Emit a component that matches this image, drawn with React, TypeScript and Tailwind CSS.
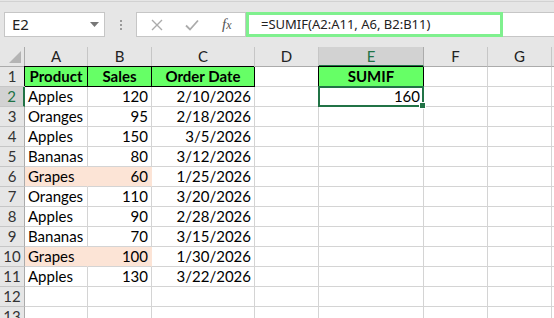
import React from 'react';

const colNames = ['A', 'B', 'C', 'D', 'E', 'F', 'G'];
const colWidths = [63, 64, 103, 64, 105, 64, 64];

type Val = string | number | null;

const data: Val[][] = [
  ['Product', 'Sales', 'Order Date', null, 'SUMIF'],
  ['Apples', 120, '2/10/2026', null, 160],
  ['Oranges', 95, '2/18/2026'],
  ['Apples', 150, '3/5/2026'],
  ['Bananas', 80, '3/12/2026'],
  ['Grapes', 60, '1/25/2026'],
  ['Oranges', 110, '3/20/2026'],
  ['Apples', 90, '2/28/2026'],
  ['Bananas', 70, '3/15/2026'],
  ['Grapes', 100, '1/30/2026'],
  ['Apples', 130, '3/22/2026'],
  [],
  [],
];

const pinkRows = [6, 10];

function Toolbar() {
  return (
    <div className="h-[47px] bg-[#e6e6e6] pt-[1px]">
      <div className="h-full border-t border-[#d2d2d2] flex items-start pt-[10px]">
        {/* name box */}
        <div className="ml-[4px] w-[101px] h-[25px] bg-white border border-[#c6c6c6] flex items-center pl-[7px] pr-[5px]">
          <span className="flex-1 text-[15px] text-[#222] font-['Noto_Sans',sans-serif]">E2</span>
          <svg width="9" height="5" viewBox="0 0 9 5">
            <path d="M0 0 L9 0 L4.5 5 Z" fill="#777" />
          </svg>
        </div>
        {/* separator dots */}
        <div className="w-[31px] h-[25px] flex flex-col items-center justify-center gap-[2px]">
          <div className="w-[2px] h-[2px] bg-[#9a9a9a]" />
          <div className="w-[2px] h-[2px] bg-[#9a9a9a]" />
          <div className="w-[2px] h-[2px] bg-[#9a9a9a]" />
        </div>
        {/* formula strip */}
        <div className="flex-1 h-[25px] bg-white border-y border-l border-[#c6c6c6] flex">
          <div className="w-[109px] h-full border-r border-[#c6c6c6] flex items-center">
            <svg className="ml-[14px]" width="12" height="12" viewBox="0 0 12 12">
              <path d="M1 1 L11 11 M11 1 L1 11" stroke="#ababab" strokeWidth="1.4" />
            </svg>
            <svg className="ml-[22px]" width="14" height="12" viewBox="0 0 14 12">
              <path d="M1 6.5 L5 10.5 L13 1.5" stroke="#ababab" strokeWidth="1.8" fill="none" />
            </svg>
            <span className="ml-[23px] text-[15px] italic text-[#555] font-['Liberation_Serif',serif] leading-none">
              f<span className="text-[12px]">x</span>
            </span>
          </div>
          <div className="w-[257px] h-[calc(100%+2px)] -mt-[1px] border-[3px] border-[#7ff08e] flex items-center pl-[12px]">
            <span className="text-[13px] text-[#222] font-['Noto_Sans',sans-serif] whitespace-nowrap">
              =SUMIF(A2:A11, A6, B2:B11)
            </span>
          </div>
        </div>
      </div>
    </div>
  );
}

function HeaderRow() {
  return (
    <div className="flex h-[20px]">
      <div className="w-[25px] shrink-0 h-full bg-[#e6e6e6] border-r border-b border-[#ababab] flex items-end justify-end p-[3px]">
        <svg width="12" height="12" viewBox="0 0 12 12">
          <path d="M12 0 L12 12 L0 12 Z" fill="#b4b4b4" />
        </svg>
      </div>
      {colNames.map((c, i) => (
        <div
          key={c}
          style={{ width: colWidths[i] }}
          className={
            c === 'E'
              ? 'shrink-0 h-full bg-[#d2d2d2] border-r border-[#ababab] border-b-2 border-b-[#217346] flex items-center justify-center text-[15px] text-[#217346]'
              : 'shrink-0 h-full bg-[#e6e6e6] border-r border-b border-[#c6c6c6] border-b-[#ababab] flex items-center justify-center text-[15px] text-[#222]'
          }
        >
          {c}
        </div>
      ))}
      <div className="flex-1 h-full bg-[#e6e6e6] border-b border-[#ababab]" />
    </div>
  );
}

function Row({ r, vals }: { r: number; vals: Val[] }) {
  const pink = pinkRows.includes(r);
  return (
    <div className="flex h-[20px]">
      <div
        className={
          r === 2
            ? 'w-[25px] shrink-0 h-full bg-[#d2d2d2] border-b border-[#c6c6c6] border-r-2 border-r-[#217346] flex items-center justify-center text-[15px] text-[#217346]'
            : 'w-[25px] shrink-0 h-full bg-[#e6e6e6] border-b border-[#c6c6c6] border-r border-r-[#ababab] flex items-center justify-center text-[15px] text-[#333]'
        }
      >
        {r}
      </div>
      {colNames.map((c, i) => {
        const v = i < vals.length ? vals[i] : null;
        const isHead = r === 1 && v !== null;
        const isNum = typeof v === 'number' || (typeof v === 'string' && /\d/.test(v));
        const sel = r === 2 && c === 'E';
        let cls = 'relative shrink-0 h-full border-r border-b border-[#d4d4d4] flex items-center px-[3px] text-[15px] text-black whitespace-nowrap';
        if (isHead) {
          cls = 'relative shrink-0 h-full bg-[#66ff66] border-r border-b border-black shadow-[-1px_-1px_0_0_#000] flex items-center justify-center font-bold text-[15px] text-black whitespace-nowrap';
        } else if (pink && i < 2) {
          cls = 'relative shrink-0 h-full bg-[#fce4d6] border-r border-b border-[#fce4d6] border-b-[#d4d4d4] flex items-center px-[3px] text-[15px] text-black whitespace-nowrap';
        }
        if (isNum && !isHead) cls += ' justify-end';
        return (
          <div key={c} style={{ width: colWidths[i] }} className={cls}>
            {v}
            {sel && (
              <div className="absolute -left-[1px] -top-[1px] w-[106px] h-[21px] border-2 border-[#217346] z-10">
                <div className="absolute -right-[4px] -bottom-[4px] w-[7px] h-[7px] bg-[#217346] border border-white" />
              </div>
            )}
          </div>
        );
      })}
      <div className="flex-1 h-full border-b border-[#d4d4d4]" />
    </div>
  );
}

export default function App() {
  return (
    <div className="w-[554px] h-[318px] overflow-hidden bg-white font-['Lato',sans-serif]">
      <Toolbar />
      <HeaderRow />
      {data.map((vals, idx) => (
        <Row key={idx} r={idx + 1} vals={vals} />
      ))}
    </div>
  );
}
